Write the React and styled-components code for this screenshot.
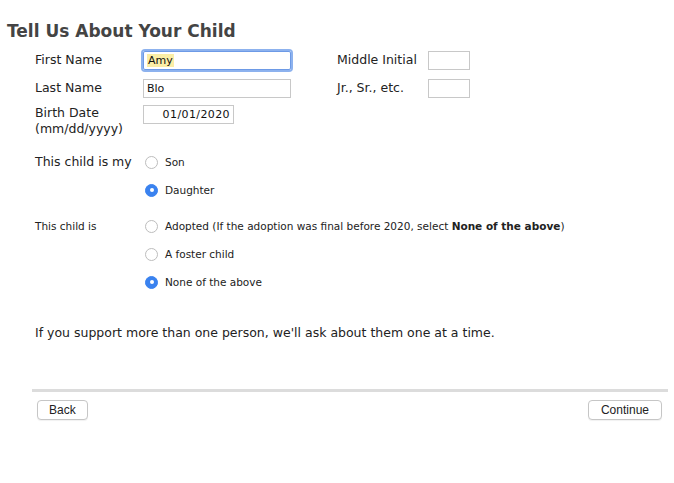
import React from "react";
import styled, { createGlobalStyle } from "styled-components";

const Global = createGlobalStyle`
  html, body { margin: 0; padding: 0; background: #fff; }
  body { font-family: "DejaVu Sans", Verdana, sans-serif; color: #222; }
`;

const Page = styled.div`
  width: 674px;
  height: 483px;
  box-sizing: border-box;
  padding: 19px 0 0 0;
`;

const Title = styled.h1`
  margin: 0 0 0 7px;
  font-size: 17px;
  font-weight: bold;
  color: #444;
  line-height: 24px;
`;

const Body = styled.div`
  padding: 3px 0 0 35px;
`;

const InfoGrid = styled.div`
  display: grid;
  grid-template-columns: 108px 148px 46px 91px 42px;
  grid-auto-rows: 28px;
  align-items: center;
`;

const Label = styled.div`
  font-size: ${(p) => (p.$small ? "10.5px" : "12.5px")};
  line-height: 16px;
  grid-column: ${(p) => p.$col || "auto"};
  align-self: ${(p) => (p.$top ? "start" : "center")};
  padding-top: ${(p) => (p.$top ? "3px" : "0")};
`;

const Field = styled.div`
  box-sizing: border-box;
  height: 19px;
  width: ${(p) => p.$w || "100%"};
  border: 1px solid ${(p) => (p.$focus ? "#6d9ae6" : "#c8c8c8")};
  box-shadow: ${(p) => (p.$focus ? "0 0 0 2px #8db2ee" : "none")};
  border-radius: ${(p) => (p.$focus ? "2px" : "0")};
  line-height: 17px;
  padding: 0 3px;
  text-align: ${(p) => (p.$right ? "right" : "left")};
  letter-spacing: ${(p) => (p.$right ? "0.4px" : "0")};
  font-size: 11px;
  color: #111;
  grid-column: ${(p) => p.$col || "auto"};
  align-self: ${(p) => (p.$top ? "start" : "center")};
  margin-top: ${(p) => (p.$top ? "3px" : "0")};
`;

const Highlight = styled.span`
  background: #fbeea6;
  padding: 0 1px;
`;

const Group = styled.div`
  display: grid;
  grid-template-columns: 108px 1fr;
  grid-auto-rows: 28px;
  align-items: center;
  margin-top: ${(p) => p.$mt || "0"};
`;

const Option = styled.label`
  grid-column: 2;
  display: flex;
  align-items: center;
  gap: 7px;
  font-size: 10.5px;
  padding-left: 2px;
`;

const Radio = styled.span`
  box-sizing: border-box;
  width: 13px;
  height: 13px;
  border-radius: 50%;
  border: 1px solid ${(p) => (p.$on ? "#3a82ef" : "#bdbdbd")};
  background: ${(p) => (p.$on ? "#3a82ef" : "#fff")};
  display: flex;
  align-items: center;
  justify-content: center;
  flex-shrink: 0;
  &::after {
    content: "";
    width: 4px;
    height: 4px;
    border-radius: 50%;
    background: ${(p) => (p.$on ? "#fff" : "transparent")};
  }
`;

const Note = styled.p`
  margin: 29px 0 0 0;
  font-size: 12.5px;
  line-height: 16px;
`;

const Divider = styled.hr`
  margin: 48px 6px 0 32px;
  border: none;
  height: 3px;
  background: #dcdcdc;
`;

const Footer = styled.div`
  display: flex;
  justify-content: space-between;
  padding: 8px 12px 0 37px;
`;

const Button = styled.button`
  font-family: "Liberation Sans", Arial, sans-serif;
  font-size: 12px;
  color: #222;
  background: #fff;
  border: 1px solid #c6c6c6;
  border-radius: 4px;
  height: 20px;
  padding: 0 ${(p) => p.$px || "10px"};
  box-shadow: 0 1px 1px rgba(0,0,0,0.06);
`;

export default function App() {
  return (
    <Page>
      <Global />
      <Title>Tell Us About Your Child</Title>
      <Body>
        <InfoGrid>
          <Label>First Name</Label>
          <Field $focus><Highlight>Amy</Highlight></Field>
          <Label $col="4">Middle Initial</Label>
          <Field />
          <Label>Last Name</Label>
          <Field>Blo</Field>
          <Label $col="4">Jr., Sr., etc.</Label>
          <Field />
          <Label $top>Birth Date<br />(mm/dd/yyyy)</Label>
          <Field $top $right $w="91px">01/01/2020</Field>
        </InfoGrid>
        <Group $mt="18px">
          <Label>This child is my</Label>
          <Option><Radio />Son</Option>
          <Option><Radio $on />Daughter</Option>
        </Group>
        <Group $mt="8px">
          <Label $small>This child is</Label>
          <Option><Radio /><span>Adopted (If the adoption was final before 2020, select <b>None of the above</b>)</span></Option>
          <Option><Radio />A foster child</Option>
          <Option><Radio $on />None of the above</Option>
        </Group>
        <Note>If you support more than one person, we'll ask about them one at a time.</Note>
      </Body>
      <Divider />
      <Footer>
        <Button $px="11px">Back</Button>
        <Button $px="12px">Continue</Button>
      </Footer>
    </Page>
  );
}
